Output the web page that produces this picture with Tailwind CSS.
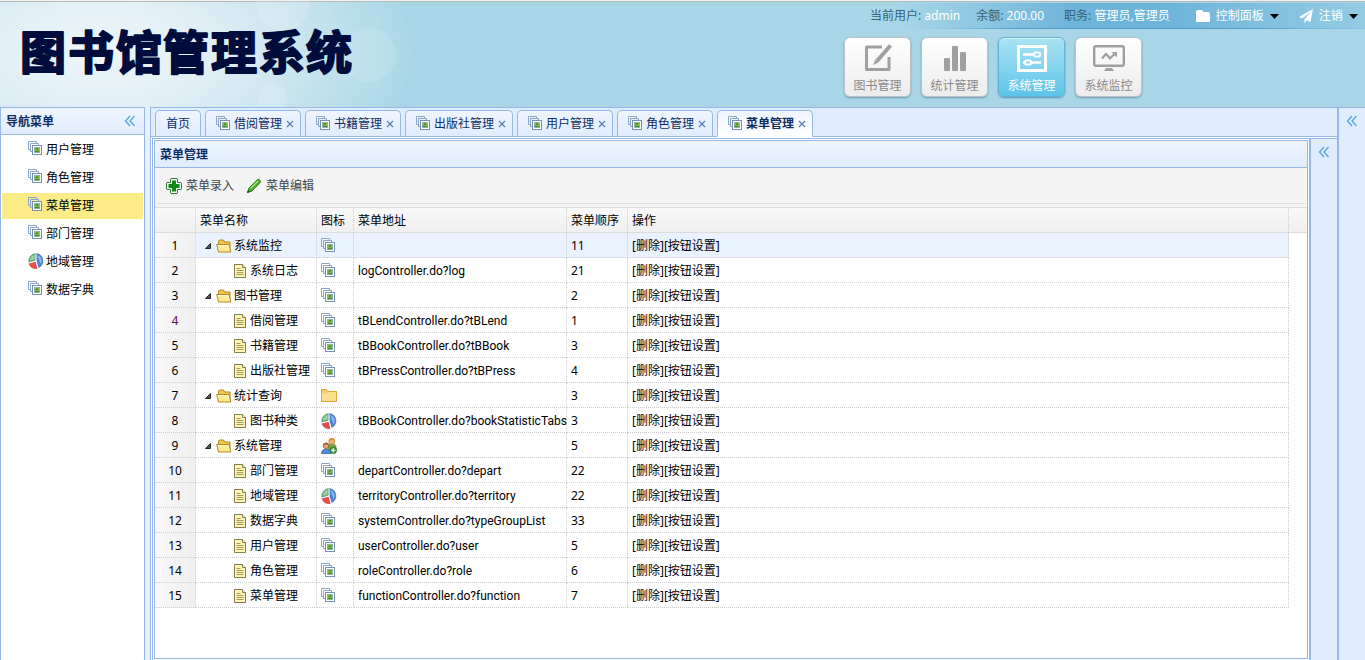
<!DOCTYPE html>
<html lang="zh-CN">
<head>
  <meta charset="UTF-8" />
  <meta name="viewport" content="width=device-width, initial-scale=1" />
  <title>图书馆管理系统</title>

  <!-- Tailwind CSS via CDN -->
  <script src="https://cdn.jsdelivr.net/npm/@tailwindcss/browser@4"></script>
</head>
<body class="flex flex-col h-screen overflow-hidden bg-[#e8f0fb] text-xs text-black font-['Noto_Sans','Noto_Sans_CJK_SC',sans-serif]">

  <!-- Icon sprite -->
  <svg class="hidden" aria-hidden="true">
    <symbol id="i-pics" viewBox="1 1 16 16">
      <path d="M1.500 9.500v-8h8v2M1.500 9.500h2" fill="none" stroke="#8ea6c6" />
      <path d="M3.500 11.500v-8h8v2M3.500 11.500h2" fill="none" stroke="#8ea6c6" />
      <rect x="5.500" y="5.500" width="9" height="9" fill="#fff" stroke="#7890b4" />
      <rect x="7.500" y="7.500" width="5" height="5" fill="#7fb83f" stroke="#8fb39a" />
      <rect x="9" y="8" width="2" height="2" fill="#4c9a2f" />
      <rect x="8" y="11" width="4" height="1" fill="#3f8a35" />
    </symbol>
    <symbol id="i-pie" viewBox="0 0 16 16">
      <path d="M8.500 .5a7.500 7.500 0 0 1 2 14.200L8.500 8z" fill="#4f86d4" stroke="#3463a8" stroke-width=".6" />
      <path d="M9.500 2a6 6 0 0 1 3 9z" fill="#8fb9ee" />
      <path d="M7.500 7.500L1 9.500A7.500 7.500 0 0 1 7.500 .5z" fill="#6fb583" stroke="#3f8c58" stroke-width=".6" />
      <path d="M6.500 2v4L2 7.500A6 6 0 0 1 6.500 2z" fill="#9bd0a6" />
      <path d="M7.500 9l1.500 6.500A7.500 7.500 0 0 1 1 10.500z" fill="#e8504c" stroke="#b92c30" stroke-width=".6" />
      <path d="M8 .5v7.500L1 10M8 8l2.200 7.200" fill="none" stroke="#fff" stroke-width="1" />
    </symbol>
    <symbol id="i-open" viewBox="0 0 16 16">
      <path d="M2.500 13.500v-10.500l1-1h4l1 2h5.500v9z" fill="#f0c650" stroke="#b5851f" />
      <path d="M.7 6.500h12.100l2 7.500H2.500z" fill="#fdea90" stroke="#b8891f" />
      <path d="M2 7.600h10l1 4" fill="none" stroke="#fffbe0" />
    </symbol>
    <symbol id="i-folder" viewBox="0 0 16 16">
      <path d="M.5 13.500v-12h5l1.500 2h8.500v10z" fill="#f6cf6c" stroke="#dba43c" />
      <path d="M1 5.500h5.500l1.500-1.500h7v9H1z" fill="#fbe08f" />
    </symbol>
    <symbol id="i-file" viewBox="0 0 16 16">
      <path d="M2.500 1.500h8l3 3v10h-11z" fill="#fdf6b8" stroke="#857c4c" />
      <path d="M10.500 1.500v3h3" fill="#fff" stroke="#857c4c" />
      <path d="M4.500 5.500h4M4.500 7.500h7M4.500 9.500h7M4.500 11.500h7" stroke="#a39a57" />
    </symbol>
    <symbol id="i-group" viewBox="0 0 16 16">
      <path d="M7 8c0-2 7-2.500 8 0v5H8z" fill="#74ac4a" stroke="#4b822d" stroke-width=".6" />
      <circle cx="10.800" cy="3.500" r="3" fill="#eab677" stroke="#b8742a" stroke-width=".7" />
      <path d="M7.800 3a3 3 0 0 1 6 0l-2-1z" fill="#d8912f" />
      <path d="M.5 15.500c0-6 9-6 9.500 0z" fill="#4d8fdc" stroke="#2b5fa5" stroke-width=".8" />
      <circle cx="5" cy="7.800" r="2.800" fill="#e4a873" stroke="#8c4d24" stroke-width=".7" />
      <path d="M2.200 7.500a2.800 2.800 0 0 1 5.600 0L5 6.300z" fill="#9a5a2b" />
      <circle cx="12.300" cy="12.300" r="3.400" fill="#43973a" stroke="#2b6e26" stroke-width=".5" />
      <path d="M12.300 10.300v4M10.300 12.300h4" stroke="#fff" stroke-width="1.300" />
    </symbol>
    <symbol id="i-collapse" viewBox="0 0 12 12">
      <path d="M6 1L1.500 6L6 11M10.500 1L6 6l4.500 5" fill="none" stroke="#4fa4e4" stroke-width="1.300" />
    </symbol>
  </svg>

  <!-- Header -->
  <header class="relative shrink-0 h-[107px] overflow-hidden bg-[#a8d6e7] border-t border-[#f3f3f1]">
    <div class="absolute inset-0 border-t border-[#b3b9bb] bg-[radial-gradient(ellipse_320px_170px_at_100px_50px,#eef6f9_0%,#e0eff5_35%,#bfe0ec_75%,#a8d6e7_100%)]"></div>
    <div class="absolute left-[256px] -top-6 size-[54px] rounded-full bg-white/15"></div>
    <div class="absolute left-[342px] top-[27px] size-[54px] rounded-full bg-white/10"></div>
    <div class="absolute left-[257px] top-[82px] size-[30px] rounded-full bg-white/15"></div>

    <div class="relative flex justify-between">
      <h1 class="pl-2 pt-3">
        <svg class="w-[370px] h-[80px] text-[46px] font-bold font-['Noto_Sans_CJK_SC',sans-serif]" fill="#000d3c" stroke="#000d3c" stroke-width="2" stroke-linejoin="round">
          <text x="12 60 108 155 203 251 298" y="56">图书馆管理系统</text>
        </svg>
      </h1>

      <div class="w-[521px] shrink-0">
        <!-- User bar -->
        <div class="mt-[2px] -ml-2 h-[26px] flex items-center pl-[34px] whitespace-nowrap border-b border-[#58a5d2] [border-image:linear-gradient(to_right,#a8d6e7_15%,#4f9fd0_35%,#4f9fd0_75%,#8cc4e0)_1] bg-[linear-gradient(to_right,#a8d6e7_12%,#6db4da_45%,#6db4da_62%,#94cbe3)] text-[#356377]">
          <span>当前用户: <span class="text-white">admin</span></span>
          <span class="ml-4">余额: <span class="text-white">200.00</span></span>
          <span class="ml-5">职务: <span class="text-white">管理员,管理员</span></span>
          <button type="button" class="ml-[26px] pt-px flex items-center text-white">
            <svg class="w-[14px] h-3 mr-[6px]" viewBox="0 0 14 12" fill="#fff"><path d="M0 2q0-2 2-2h4q1 0 1 2h5q2 0 2 2v7q0 1-1 1H1q-1 0-1-1z" /></svg>
            控制面板
            <svg class="w-[9px] h-[5px] ml-[6px]" viewBox="0 0 9 5"><path d="M0 0h9L4.500 5z" /></svg>
          </button>
          <button type="button" class="ml-5 pt-px flex items-center text-white">
            <svg class="size-[14px] mr-[6px]" viewBox="0 0 14 14" fill="#fff"><path d="M14 0L0 8l3.300 1.500L12 2.500 5.500 10.300V14l2.300-2.700L11.500 13z" /></svg>
            注销
            <svg class="w-[9px] h-[5px] ml-[6px]" viewBox="0 0 9 5"><path d="M0 0h9L4.500 5z" /></svg>
          </button>
        </div>

        <!-- Shortcut buttons -->
        <nav class="mt-2 flex gap-[10px] text-[#8a8a8a]">
          <button type="button" class="w-[67px] h-[60px] flex flex-col items-center pt-[6px] rounded-md border border-[#b9c3c8] bg-linear-to-b from-white to-[#ececec] shadow-[0_1px_2px_#6d93a1]">
            <svg class="w-8 h-7" viewBox="0 0 32 28" fill="none" stroke="#a0a0a0">
              <path d="M20 3H4.500v22.500h22.500V13" stroke-width="3" stroke-linejoin="round" />
              <path d="M28.500 1.500L15 17" stroke-width="4" />
              <path d="M13.500 15.500L11 21l5.500-2.500z" fill="#a0a0a0" stroke="none" />
            </svg>
            <span class="mt-[6px] leading-4">图书管理</span>
          </button>
          <button type="button" class="w-[67px] h-[60px] flex flex-col items-center pt-[6px] rounded-md border border-[#b9c3c8] bg-linear-to-b from-white to-[#ececec] shadow-[0_1px_2px_#6d93a1]">
            <svg class="w-8 h-7" viewBox="0 0 32 28" fill="#a0a0a0">
              <rect x="5" y="14" width="6" height="13" rx="1" />
              <rect x="13" y="2" width="6" height="25" rx="1" />
              <rect x="21" y="8" width="6" height="19" rx="1" />
            </svg>
            <span class="mt-[6px] leading-4">统计管理</span>
          </button>
          <button type="button" class="w-[67px] h-[60px] flex flex-col items-center pt-[6px] rounded-md border border-[#62b3d3] bg-linear-to-b from-[#a9e3f3] to-[#5cc3ea] shadow-[0_1px_2px_#5a93ab,inset_0_1px_0_#d8f4fb] text-white">
            <svg class="w-8 h-7" viewBox="0 0 32 28" fill="none" stroke="#fff">
              <rect x="2.500" y="2.500" width="27" height="24" stroke-width="3" />
              <path d="M7 10.500h11M7 18.500h3M15 18.500h10" stroke-width="2.500" />
              <rect x="18" y="8.500" width="6" height="4" rx="1.500" stroke-width="2" />
              <rect x="9" y="16.500" width="6" height="4" rx="1.500" stroke-width="2" />
            </svg>
            <span class="mt-[6px] leading-4">系统管理</span>
          </button>
          <button type="button" class="w-[67px] h-[60px] flex flex-col items-center pt-[6px] rounded-md border border-[#b9c3c8] bg-linear-to-b from-white to-[#ececec] shadow-[0_1px_2px_#6d93a1]">
            <svg class="w-8 h-7" viewBox="0 0 32 28" fill="none" stroke="#a0a0a0">
              <rect x="1.200" y="2.200" width="29.600" height="19.600" rx="1.500" stroke-width="2.400" />
              <path d="M9 14.500l4-4.500 4 4.500 5-5" stroke-width="2.200" />
              <path d="M18.500 8h5.500v5.500z" fill="#a0a0a0" stroke="none" />
              <path d="M13 24h6l2 3H11z" fill="#a0a0a0" stroke="none" />
            </svg>
            <span class="mt-[6px] leading-4">系统监控</span>
          </button>
        </nav>
      </div>
    </div>
  </header>

  <div class="flex-1 min-h-0 flex">
    <!-- Sidebar -->
    <aside class="w-[145px] shrink-0 bg-white border border-b-0 border-[#95b8e7]">
      <div class="flex items-center justify-between h-[27px] pl-[5px] pr-2 border-b border-[#95b8e7] bg-linear-to-b from-[#eff5ff] to-[#e0ecff]">
        <h2 class="pt-[2px] font-bold text-[#0e2d5f]">导航菜单</h2>
        <button type="button" aria-label="收起"><svg class="size-3"><use href="#i-collapse" /></svg></button>
      </div>
      <ul id="nav" class="flex flex-col gap-[2px] px-px pt-[2px]"></ul>
    </aside>

    <!-- Main area -->
    <main class="ml-[5px] flex-1 min-w-0 flex flex-col bg-white border-t border-l border-[#95b8e7]">
      <div id="tabs" class="shrink-0 flex items-end gap-1 h-[29px] pl-1 bg-[#e0ecff] border-b border-[#95b8e7]"></div>

      <div class="mt-px ml-px flex-1 min-h-0 flex border-t border-l border-[#95b8e7]">
        <section class="flex-1 min-w-0 mt-px ml-px mr-px mb-px flex flex-col bg-white border border-[#95b8e7]">
          <h2 class="h-[27px] shrink-0 pl-[5px] leading-7 font-bold text-[#0e2d5f] border-b border-[#95b8e7] bg-linear-to-b from-[#eff5ff] to-[#e0ecff]">菜单管理</h2>
          <div class="shrink-0 px-[3px] pb-[3px] bg-[#f4f4f4] border-b border-[#ddd]">
            <div class="flex items-center h-9 pl-2 gap-3 text-[#444] border-b border-[#ddd]">
              <button type="button" class="flex items-center gap-1">
                <svg class="size-4" viewBox="0 0 16 16"><path d="M5 .5h6l.5.5v3.500H15l.5.5v6l-.5.5h-3.500V15l-.5.500H5l-.5-.5v-3.500H1l-.5-.5V5l.5-.5h3.500V1z" fill="#f2fbef" stroke="#3f7a45" stroke-linejoin="round" /><path d="M8 2.500v11M2.500 8h11" stroke="#0f8a1a" stroke-width="4" /></svg>
                菜单录入
              </button>
              <button type="button" class="flex items-center gap-1">
                <svg class="size-4" viewBox="0 0 16 16"><path d="M1.500 14.500l1.500-4.500L11 2q1.500-1.200 2.700 0t.3 2.700L6 13z" fill="#4fae2c" stroke="#2f7f20" /><path d="M4.500 10.500L12 3" stroke="#a5e07c" stroke-width="1.500" /><path d="M1 15l1-3 2 2z" fill="#1f4d15" /></svg>
                菜单编辑
              </button>
            </div>
          </div>

          <!-- Menu grid -->
          <table class="w-full table-fixed border-separate border-spacing-0 text-left whitespace-nowrap">
            <colgroup>
              <col class="w-[41px]" /><col class="w-[121px]" /><col class="w-[37px]" /><col class="w-[213px]" /><col class="w-[61px]" /><col /><col class="w-[18px]" />
            </colgroup>
            <thead class="bg-linear-to-b from-[#f9f9f9] to-[#efefef]">
              <tr class="h-[25px] *:p-0 *:pl-1 *:pt-[2px] *:font-normal *:border-b *:border-b-[#ddd] *:border-r *:border-r-[#ccc] *:[border-right-style:dotted] *:last:border-r-0">
                <th></th>
                <th>菜单名称</th>
                <th>图标</th>
                <th>菜单地址</th>
                <th>菜单顺序</th>
                <th>操作</th>
                <th></th>
              </tr>
            </thead>
            <tbody id="rows"></tbody>
          </table>
        </section>

        <aside class="w-7 shrink-0 border-l-2 border-[#95b8e7] bg-[#e0ecff] flex justify-center items-start pt-[7px]">
          <button type="button" aria-label="展开"><svg class="size-3"><use href="#i-collapse" /></svg></button>
        </aside>
      </div>
    </main>

    <aside class="w-7 shrink-0 border-t border-l-2 border-t-[#95b8e7] border-l-[#95b8e7] bg-[#e0ecff] flex justify-center items-start pt-[7px]">
      <button type="button" aria-label="展开"><svg class="size-3"><use href="#i-collapse" /></svg></button>
    </aside>
  </div>

  <script>
    const navItems = [
      ['用户管理', 'pics'],
      ['角色管理', 'pics'],
      ['菜单管理', 'pics'],
      ['部门管理', 'pics'],
      ['地域管理', 'pie'],
      ['数据字典', 'pics'],
    ];
    const tabs = ['首页', '借阅管理', '书籍管理', '出版社管理', '用户管理', '角色管理', '菜单管理'];
    const current = '菜单管理';

    // name, icon, url, order (no url = folder)
    const menus = [
      ['系统监控', 'pics', '', 11],
      ['系统日志', 'pics', 'logController.do?log', 21],
      ['图书管理', 'pics', '', 2],
      ['借阅管理', 'pics', 'tBLendController.do?tBLend', 1],
      ['书籍管理', 'pics', 'tBBookController.do?tBBook', 3],
      ['出版社管理', 'pics', 'tBPressController.do?tBPress', 4],
      ['统计查询', 'folder', '', 3],
      ['图书种类', 'pie', 'tBBookController.do?bookStatisticTabs', 3],
      ['系统管理', 'group', '', 5],
      ['部门管理', 'pics', 'departController.do?depart', 22],
      ['地域管理', 'pie', 'territoryController.do?territory', 22],
      ['数据字典', 'pics', 'systemController.do?typeGroupList', 33],
      ['用户管理', 'pics', 'userController.do?user', 5],
      ['角色管理', 'pics', 'roleController.do?role', 6],
      ['菜单管理', 'pics', 'functionController.do?function', 7],
    ];

    const icon = (name) => `<svg class="size-4 shrink-0"><use href="#i-${name}" /></svg>`;

    document.getElementById('nav').innerHTML = navItems.map(([text, ic]) => `
      <li><a href="#" class="flex items-start gap-[2px] h-[26px] pt-1 pl-[26px] ${text === current ? 'bg-[#fbec88]' : ''}">${icon(ic)}<span class="pt-px">${text}</span></a></li>
    `).join('');

    document.getElementById('tabs').innerHTML = tabs.map((text, i) => `
      <div class="flex items-center border border-[#95b8e7] rounded-t-[5px] px-[10px] text-[#0e2d5f] ${text === current ? 'h-[27px] -mb-px border-b-white font-bold bg-linear-to-b from-[#eff5ff] to-white' : 'h-[26px] border-b-0 bg-linear-to-b from-[#eff5ff] to-[#e0ecff]'}">
        <button type="button" class="flex items-center gap-[2px] whitespace-nowrap">${i ? icon('pics') : ''}${text}</button>
        ${i ? '<button type="button" aria-label="关闭" class="ml-1 -mr-1"><svg class="size-2" viewBox="0 0 8 8"><path d="M1 1l6 6M7 1L1 7" stroke="#5a7fb5" stroke-width="1.200" /></svg></button>' : ''}
      </div>
    `).join('');

    document.getElementById('rows').innerHTML = menus.map(([name, ic, url, order], i) => `
      <tr class="h-[25px] *:p-0 *:pl-1 *:pt-[2px] *:border-b *:border-r *:border-dotted *:border-[#ccc] *:last:border-0 *:last:bg-white ${i === 0 ? 'bg-[#eaf2ff]' : ''}">
        <td class="bg-linear-to-r from-[#f9f9f9] to-[#efefef]"><div class="pr-1 text-center ${i === 3 ? 'text-[#5b0f5b]' : ''}">${i + 1}</div></td>
        <td>
          <div class="flex items-center gap-[2px] ${url ? 'pl-8' : 'pl-1'}">
            ${url ? icon('file') : `<svg class="size-2 mr-[2px]" viewBox="0 0 8 8"><path d="M6.500 1.500v5h-5z" fill="#555" stroke="#222" /></svg>${icon('open')}`}
            <span>${name}</span>
          </div>
        </td>
        <td>${icon(ic)}</td>
        <td class="font-[Roboto,'Noto_Sans',sans-serif]">${url}</td>
        <td>${order}</td>
        <td><a href="#">[删除]</a><a href="#">[按钮设置]</a></td>
        <td></td>
      </tr>
    `).join('');
  </script>
</body>
</html>
